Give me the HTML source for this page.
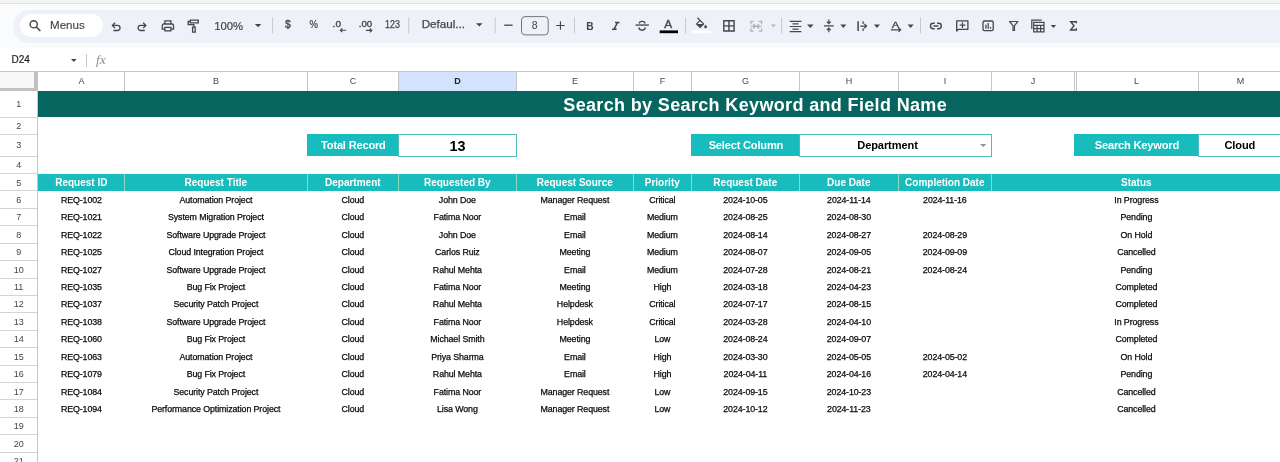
<!DOCTYPE html>
<html><head><meta charset="utf-8"><title>Search Sheet</title>
<style>
html,body{margin:0;padding:0;}
body{width:1280px;height:462px;overflow:hidden;background:#fff;position:relative;font-family:"Liberation Sans",Arial,sans-serif;color:#1f1f1f;}
#wrap{position:absolute;left:0;top:0;width:1280px;height:462px;overflow:hidden;will-change:transform;}
.abs{position:absolute;}
.t{position:absolute;width:400px;height:20px;line-height:20px;text-align:center;white-space:nowrap;}
.tt{position:absolute;white-space:nowrap;line-height:1;}
.c{color:#0a0a0a;letter-spacing:-0.1px;-webkit-text-stroke:0.25px #0a0a0a;}
.h{color:#fff;font-weight:bold;}
.n{color:#444746;}
svg{position:absolute;overflow:visible;}
</style></head><body><div id="wrap">

<div class="abs" style="left:0;top:0;width:1280px;height:3px;background:#f3f3f1"></div>
<div class="abs" style="left:0;top:3px;width:1280px;height:1px;background:#e1e1e1"></div>
<div class="abs" style="left:0;top:4px;width:1280px;height:44px;background:#f9fbfd"></div>
<div class="abs" style="left:13px;top:10px;width:1300px;height:32.5px;border-radius:17px;background:#eef1f7"></div>
<div class="abs" style="left:20px;top:14px;width:83px;height:23px;border-radius:12px;background:#fff"></div>
<svg style="left:0;top:0" width="1280" height="48" viewBox="0 0 1280 48" fill="none" stroke="#444746" stroke-width="1.3" stroke-linecap="butt" stroke-linejoin="miter" font-family="'Liberation Sans',Arial,sans-serif">
<!-- search -->
<circle cx="33.7" cy="24.3" r="3.6" stroke-width="1.4"/><path d="M36.4 27L40.4 31" stroke-width="1.5"/>
<text x="50" y="29.2" font-size="11.6" fill="#444746" stroke="#444746" stroke-width="0.15" textLength="34.7" lengthAdjust="spacingAndGlyphs">Menus</text>
<!-- undo -->
<path d="M112.6 25.4H117.5a2.55 2.55 0 0 1 0 5.1H113.4M115 22.8L112.4 25.4L115 28"/>
<!-- redo -->
<path d="M145.6 25.4H140.7a2.55 2.55 0 0 0 0 5.1H144.8M143.2 22.8L145.8 25.4L143.2 28"/>
<!-- print -->
<path d="M164.9 24V20.9H170.9V24M164.6 29.2H162.3V25.4a1.4 1.4 0 0 1 1.4 -1.4H172.1a1.4 1.4 0 0 1 1.4 1.4V29.2H171.2M164.9 27.3H170.9V30.9H164.9z"/>
<!-- paint format -->
<path d="M190.3 20.2H198.3V22.9H190.3zM190.3 21.5H188.2V24.7H193.9V27.2M192.6 27.2H195.2V32.2H192.6z"/>
<text x="214.2" y="29.6" font-size="11.8" fill="#444746" stroke="#444746" stroke-width="0.2" textLength="28.9" lengthAdjust="spacingAndGlyphs">100%</text>
<path d="M254.8 24H261.4L258.1 27.3z" fill="#444746" stroke="none"/>
<path d="M272.6 17.5V33.5M408.7 17.5V33.5M495.2 17.5V33.5M574.5 17.5V33.5M685.5 17.5V33.5M781.6 17.5V33.5M920.5 17.5V33.5" stroke="#c7c9cc" stroke-width="1"/>
<text x="284.9" y="28.2" font-size="10.6" fill="#444746" stroke="#444746" stroke-width="0.35" textLength="5.8" lengthAdjust="spacingAndGlyphs">$</text>
<text x="309.6" y="28.4" font-size="10.6" fill="#444746" stroke="#444746" stroke-width="0.2" textLength="8.4" lengthAdjust="spacingAndGlyphs">%</text>
<text x="332.6" y="27.2" font-size="9.4" fill="#444746" stroke="#444746" stroke-width="0.35" textLength="8.4" lengthAdjust="spacingAndGlyphs">.0</text>
<path d="M346.2 30.2H340.4M342.3 28.3L340.3 30.2L342.3 32.1" stroke-width="1.1"/>
<text x="358.7" y="27.2" font-size="9.4" fill="#444746" stroke="#444746" stroke-width="0.35" textLength="13.5" lengthAdjust="spacingAndGlyphs">.00</text>
<path d="M365.9 30.4H371.7M369.8 28.5L371.8 30.4L369.8 32.3" stroke-width="1.1"/>
<text x="385" y="28.2" font-size="10.2" fill="#444746" stroke="#444746" stroke-width="0.25" textLength="14.9" lengthAdjust="spacingAndGlyphs">123</text>
<text x="421.7" y="27.8" font-size="11.2" fill="#444746" stroke="#444746" stroke-width="0.25" textLength="43.4" lengthAdjust="spacingAndGlyphs">Defaul...</text>
<path d="M476 23.2H482.6L479.3 26.5z" fill="#444746" stroke="none"/>
<path d="M504.2 25.2H512.6"/>
<rect x="521.5" y="16.6" width="26.7" height="18.3" rx="3.5" stroke="#747775" stroke-width="1"/>
<text x="531.7" y="28.8" font-size="10.5" fill="#444746" stroke="none">8</text>
<path d="M556.2 25.5H564.7M560.45 21.2V29.8" stroke-width="1.15"/>
<text x="586.2" y="29.9" font-size="11.8" font-weight="bold" fill="#444746" stroke="none" textLength="7.4" lengthAdjust="spacingAndGlyphs">B</text>
<path d="M615 22.4H619.6M612 29.3H616.6M617.6 22.4L614 29.3" stroke-width="1.5"/>
<!-- strikethrough -->
<path d="M635.5 25.05H648.9" stroke-width="1.35"/>
<path d="M645 23.4C645 22 643.6 21.4 642.1 21.4C640.6 21.4 639.3 22 639.3 23.4M639 27.6C639 29.4 640.5 30.2 642.1 30.2C643.8 30.2 645.2 29.4 645.2 27.6" stroke-width="1.4"/>
<!-- text color -->
<text x="664.2" y="27.8" font-size="11.2" fill="#444746" stroke="#444746" stroke-width="0.35" textLength="7.9" lengthAdjust="spacingAndGlyphs">A</text>
<rect x="659.7" y="30.4" width="18.3" height="2.8" fill="#000" stroke="none"/>
<!-- fill color -->
<path d="M697.4 17.700L703.6 23.900L700.1 27.400L696.600 23.900L700.1 20.400" stroke-width="1.25"/>
<path d="M696.800 23.900H703.400L700.1 27.200z" fill="#444746" stroke="none"/>
<path d="M705.6 24.700C705.6 24.700 704.2 26.200 704.2 26.900A1.4 1.4 0 0 0 707 26.900C707 26.200 705.6 24.700 705.6 24.700z" fill="#444746" stroke="none"/>
<rect x="691.5" y="30.4" width="19.3" height="2.8" fill="#fff" stroke="none"/>
<!-- borders -->
<path d="M723.8 20.8H734.100V31H723.8zM728.950 20.8V31M723.8 25.9H734.100" stroke-width="1.4"/>
<!-- merge (disabled) -->
<g stroke="#aeb2b8" stroke-width="1.25">
<path d="M753.6 21.4H750.8V24.300M750.8 28.200V31.100H753.6M758.800 21.4H761.600V24.300M761.600 28.200V31.100H758.800M750.8 26.25H755.300M753.300 24L755.600 26.25L753.300 28.500M761.600 26.25H757.100M759.100 24L756.800 26.25L759.100 28.500"/>
</g>
<path d="M770.9 24.6H776L773.450 27.6z" fill="#b4b8bd" stroke="none"/>
<!-- align center -->
<path d="M789.7 21.3H801.4M792.5 23.9H798.6M789.7 26.5H801.4M792.5 29.1H798.6M789.7 31.7H801.4" stroke-width="1.2"/>
<path d="M807 24.6H813.6L810.3 27.9z" fill="#444746" stroke="none"/>
<!-- valign middle -->
<path d="M823.9 25.9H833.7M828.8 19.4V23.200M826.900 21.600L828.8 23.600L830.700 21.600M828.8 32.300V28.600M826.900 30.200L828.8 28.200L830.700 30.200" stroke-width="1.2"/>
<path d="M840.3 24.6H846.4L843.350 27.9z" fill="#444746" stroke="none"/>
<!-- wrap overflow -->
<path d="M858.1 21.200V31.100" stroke-width="1.5"/>
<path d="M860.3 26.1H866.300M864.300 23.900L866.600 26.1L864.300 28.300M863.100 21.200V24M863.100 28.300V31.100" stroke-width="1.2"/>
<path d="M873.9 24.6H880L876.950 27.9z" fill="#444746" stroke="none"/>
<!-- rotate -->
<text x="891.7" y="27.700" font-size="9.600" fill="#444746" stroke="#444746" stroke-width="0.35" textLength="7.5" lengthAdjust="spacingAndGlyphs">A</text>
<path d="M890.8 29.800H900.200M898.500 27.900L900.600 29.800L898.500 31.700" stroke-width="1.25"/>
<path d="M907.600 24.6H913.700L910.650 27.9z" fill="#444746" stroke="none"/>
<!-- link -->
<path d="M934.700 23.300H933.200a2.750 2.750 0 0 0 0 5.500H934.700M937.100 23.300H938.600a2.750 2.750 0 0 1 0 5.500H937.100M933.400 26.050H938.400" stroke-width="1.4"/>
<!-- comment -->
<path d="M956.700 31V20.800H967.900V29.300H958.400z" stroke-width="1.3" stroke-linejoin="round"/>
<path d="M959.600 25.200H965.400M962.500 22.300V28.100" stroke-width="1.2"/>
<!-- chart -->
<rect x="983" y="21" width="10.2" height="9.700" rx="1.4" stroke-width="1.3"/>
<path d="M985.900 28.700V24.800M988.200 28.700V23M990.500 28.700V26.900" stroke-width="1.25"/>
<!-- filter -->
<path d="M1009.600 21.500H1017.900L1014.500 25.700V30.400H1013V25.700z" stroke-width="1.2" stroke-linejoin="round"/>
<!-- filter views -->
<path d="M1033.700 22.300H1044V31.800H1033.700zM1033.700 25.400H1044M1033.700 28.600H1044M1037.100 25.400V31.800M1040.600 25.400V31.800" stroke-width="1.2"/>
<path d="M1031.800 28.900V20.200H1041.600" stroke-width="1.2"/>
<path d="M1050.700 24.900H1056.100L1053.400 27.900z" fill="#444746" stroke="none"/>
<!-- sigma -->
<path d="M1076.300 23.300V21.700H1070.700L1074 25.800L1070.700 29.900H1076.300V28.300" stroke-width="1.45"/>
</svg>

<div class="abs" style="left:0;top:48px;width:1280px;height:23px;background:#fff"></div>
<div class="tt" style="left:11.5px;top:54.6px;font-size:10px;color:#1f1f1f;-webkit-text-stroke:0.2px #1f1f1f;">D24</div>
<svg style="left:70.8px;top:58.6px" width="5.6" height="3" viewBox="0 0 5.6 3"><path d="M0 0h5.6l-2.8 3z" fill="#444746"/></svg>
<div class="abs" style="left:86px;top:54px;width:1px;height:13px;background:#c7c7c7"></div>
<div class="tt" style="left:96px;top:53px;font-size:13.5px;font-style:italic;font-family:'Liberation Serif',serif;color:#8a8f94;">fx</div>
<div class="abs" style="left:0;top:71px;width:1280px;height:1px;background:#c4c7c5"></div>
<div class="abs" style="left:0;top:72px;width:34px;height:16px;background:#f8f9fa"></div>
<div class="abs" style="left:34px;top:72px;width:4px;height:19px;background:#c2c2c2"></div>
<div class="abs" style="left:0;top:88px;width:38px;height:3px;background:#c2c2c2"></div>
<div class="abs" style="left:399px;top:72px;width:117px;height:19px;background:#d3e3fd"></div>
<div class="abs" style="left:124px;top:72px;width:1px;height:19px;background:#c4c7c5"></div>
<div class="t n" style="left:-118.50px;top:70.88px;font-size:9px;color:#444746;"><span>A</span></div>
<div class="abs" style="left:307px;top:72px;width:1px;height:19px;background:#c4c7c5"></div>
<div class="t n" style="left:16.00px;top:70.88px;font-size:9px;color:#444746;"><span>B</span></div>
<div class="abs" style="left:398px;top:72px;width:1px;height:19px;background:#c4c7c5"></div>
<div class="t n" style="left:153.00px;top:70.88px;font-size:9px;color:#444746;"><span>C</span></div>
<div class="abs" style="left:516px;top:72px;width:1px;height:19px;background:#c4c7c5"></div>
<div class="t n" style="left:257.50px;top:70.88px;font-size:9px;color:#1f1f1f;font-weight:bold;"><span>D</span></div>
<div class="abs" style="left:633px;top:72px;width:1px;height:19px;background:#c4c7c5"></div>
<div class="t n" style="left:375.00px;top:70.88px;font-size:9px;color:#444746;"><span>E</span></div>
<div class="abs" style="left:691px;top:72px;width:1px;height:19px;background:#c4c7c5"></div>
<div class="t n" style="left:462.50px;top:70.88px;font-size:9px;color:#444746;"><span>F</span></div>
<div class="abs" style="left:799px;top:72px;width:1px;height:19px;background:#c4c7c5"></div>
<div class="t n" style="left:545.50px;top:70.88px;font-size:9px;color:#444746;"><span>G</span></div>
<div class="abs" style="left:898px;top:72px;width:1px;height:19px;background:#c4c7c5"></div>
<div class="t n" style="left:649.00px;top:70.88px;font-size:9px;color:#444746;"><span>H</span></div>
<div class="abs" style="left:991px;top:72px;width:1px;height:19px;background:#c4c7c5"></div>
<div class="t n" style="left:745.00px;top:70.88px;font-size:9px;color:#444746;"><span>I</span></div>
<div class="abs" style="left:1074px;top:72px;width:1px;height:19px;background:#c4c7c5"></div>
<div class="t n" style="left:833.00px;top:70.88px;font-size:9px;color:#444746;"><span>J</span></div>
<div class="abs" style="left:1198px;top:72px;width:1px;height:19px;background:#c4c7c5"></div>
<div class="t n" style="left:936.50px;top:70.88px;font-size:9px;color:#444746;"><span>L</span></div>
<div class="t n" style="left:1040.50px;top:70.88px;font-size:9px;color:#444746;"><span>M</span></div>
<div class="abs" style="left:1076px;top:72px;width:1px;height:19px;background:#c4c7c5"></div>
<div class="abs" style="left:37px;top:91px;width:1px;height:371px;background:#c4c7c5"></div>
<div class="abs" style="left:0;top:117px;width:37px;height:1px;background:#d3d5d4"></div>
<div class="t n" style="left:-181.30px;top:93.88px;font-size:9px;"><span>1</span></div>
<div class="abs" style="left:0;top:134px;width:37px;height:1px;background:#d3d5d4"></div>
<div class="t n" style="left:-181.30px;top:115.88px;font-size:9px;"><span>2</span></div>
<div class="abs" style="left:0;top:156px;width:37px;height:1px;background:#d3d5d4"></div>
<div class="t n" style="left:-181.30px;top:134.88px;font-size:9px;"><span>3</span></div>
<div class="abs" style="left:0;top:173px;width:37px;height:1px;background:#d3d5d4"></div>
<div class="t n" style="left:-181.30px;top:154.88px;font-size:9px;"><span>4</span></div>
<div class="abs" style="left:0;top:190px;width:37px;height:1px;background:#d3d5d4"></div>
<div class="t n" style="left:-181.30px;top:172.88px;font-size:9px;"><span>5</span></div>
<div class="abs" style="left:0;top:208px;width:37px;height:1px;background:#d3d5d4"></div>
<div class="t n" style="left:-181.30px;top:189.88px;font-size:9px;"><span>6</span></div>
<div class="abs" style="left:0;top:225px;width:37px;height:1px;background:#d3d5d4"></div>
<div class="t n" style="left:-181.30px;top:206.88px;font-size:9px;"><span>7</span></div>
<div class="abs" style="left:0;top:243px;width:37px;height:1px;background:#d3d5d4"></div>
<div class="t n" style="left:-181.30px;top:224.88px;font-size:9px;"><span>8</span></div>
<div class="abs" style="left:0;top:260px;width:37px;height:1px;background:#d3d5d4"></div>
<div class="t n" style="left:-181.30px;top:241.88px;font-size:9px;"><span>9</span></div>
<div class="abs" style="left:0;top:278px;width:37px;height:1px;background:#d3d5d4"></div>
<div class="t n" style="left:-181.30px;top:259.88px;font-size:9px;"><span>10</span></div>
<div class="abs" style="left:0;top:295px;width:37px;height:1px;background:#d3d5d4"></div>
<div class="t n" style="left:-181.30px;top:276.88px;font-size:9px;"><span>11</span></div>
<div class="abs" style="left:0;top:312px;width:37px;height:1px;background:#d3d5d4"></div>
<div class="t n" style="left:-181.30px;top:293.88px;font-size:9px;"><span>12</span></div>
<div class="abs" style="left:0;top:330px;width:37px;height:1px;background:#d3d5d4"></div>
<div class="t n" style="left:-181.30px;top:311.88px;font-size:9px;"><span>13</span></div>
<div class="abs" style="left:0;top:347px;width:37px;height:1px;background:#d3d5d4"></div>
<div class="t n" style="left:-181.30px;top:328.88px;font-size:9px;"><span>14</span></div>
<div class="abs" style="left:0;top:365px;width:37px;height:1px;background:#d3d5d4"></div>
<div class="t n" style="left:-181.30px;top:346.88px;font-size:9px;"><span>15</span></div>
<div class="abs" style="left:0;top:382px;width:37px;height:1px;background:#d3d5d4"></div>
<div class="t n" style="left:-181.30px;top:363.88px;font-size:9px;"><span>16</span></div>
<div class="abs" style="left:0;top:399px;width:37px;height:1px;background:#d3d5d4"></div>
<div class="t n" style="left:-181.30px;top:381.88px;font-size:9px;"><span>17</span></div>
<div class="abs" style="left:0;top:417px;width:37px;height:1px;background:#d3d5d4"></div>
<div class="t n" style="left:-181.30px;top:398.88px;font-size:9px;"><span>18</span></div>
<div class="abs" style="left:0;top:434px;width:37px;height:1px;background:#d3d5d4"></div>
<div class="t n" style="left:-181.30px;top:415.88px;font-size:9px;"><span>19</span></div>
<div class="abs" style="left:0;top:452px;width:37px;height:1px;background:#d3d5d4"></div>
<div class="t n" style="left:-181.30px;top:433.88px;font-size:9px;"><span>20</span></div>
<div class="abs" style="left:0;top:469px;width:37px;height:1px;background:#d3d5d4"></div>
<div class="t n" style="left:-181.30px;top:450.88px;font-size:9px;"><span>21</span></div>
<div class="abs" style="left:38px;top:91px;width:1242px;height:26px;background:#06655f"></div>
<div class="t h" id="title" style="left:555.20px;top:94.76px;font-size:18px;letter-spacing:0.35px;"><span>Search by Search Keyword and Field Name</span></div>
<div class="abs" style="left:307px;top:134px;width:91px;height:22px;background:#19bcbd"></div>
<div class="t h" id="l1" style="left:153.40px;top:135.16px;font-size:11.07px;letter-spacing:-0.18px;"><span>Total Record</span></div>
<div class="abs" style="left:398px;top:134px;width:119px;height:23px;box-sizing:border-box;border:1px solid #4fbcbc;background:#fff"></div>
<div class="t " id="v1" style="left:257.50px;top:136.01px;font-size:14.4px;color:#000;font-weight:bold;letter-spacing:0px;"><span>13</span></div>
<div class="abs" style="left:691px;top:134px;width:108px;height:22px;background:#19bcbd"></div>
<div class="t h" id="l2" style="left:545.90px;top:135.16px;font-size:11.07px;letter-spacing:-0.18px;"><span>Select Column</span></div>
<div class="abs" style="left:799px;top:134px;width:193px;height:23px;box-sizing:border-box;border:1px solid #4fbcbc;background:#fff"></div>
<div class="t " id="v2" style="left:687.50px;top:135.16px;font-size:11.07px;color:#000;font-weight:bold;letter-spacing:-0.1px;"><span>Department</span></div>
<svg style="left:979.8px;top:144.2px" width="6.4" height="3" viewBox="0 0 6.4 3"><path d="M0 0h6.4l-3.200 3z" fill="#8f9498"/></svg>
<div class="abs" style="left:1074px;top:134px;width:124px;height:22px;background:#19bcbd"></div>
<div class="t h" id="l3" style="left:936.90px;top:135.16px;font-size:11.07px;letter-spacing:-0.18px;"><span>Search Keyword</span></div>
<div class="abs" style="left:1198px;top:134px;width:85px;height:23px;box-sizing:border-box;border:1px solid #4fbcbc;background:#fff"></div>
<div class="t " id="v3" style="left:1039.80px;top:135.16px;font-size:11.07px;color:#000;font-weight:bold;letter-spacing:-0.1px;"><span>Cloud</span></div>
<div class="abs" style="left:38px;top:173px;width:1242px;height:1px;background:#fbf8e6"></div>
<div class="abs" style="left:38px;top:174px;width:1242px;height:17px;background:#19bcbd"></div>
<div class="abs" style="left:123.5px;top:174px;width:1px;height:17px;background:#8bd9c0"></div>
<div class="t h" id="hA" style="left:-118.70px;top:172.53px;font-size:10px;"><span>Request ID</span></div>
<div class="abs" style="left:306.5px;top:174px;width:1px;height:17px;background:#8bd9c0"></div>
<div class="t h" id="hB" style="left:15.80px;top:172.53px;font-size:10px;"><span>Request Title</span></div>
<div class="abs" style="left:397.5px;top:174px;width:1px;height:17px;background:#8bd9c0"></div>
<div class="t h" id="hC" style="left:152.80px;top:172.53px;font-size:10px;"><span>Department</span></div>
<div class="abs" style="left:515.5px;top:174px;width:1px;height:17px;background:#8bd9c0"></div>
<div class="t h" id="hD" style="left:257.30px;top:172.53px;font-size:10px;"><span>Requested By</span></div>
<div class="abs" style="left:632.5px;top:174px;width:1px;height:17px;background:#8bd9c0"></div>
<div class="t h" id="hE" style="left:374.80px;top:172.53px;font-size:10px;"><span>Request Source</span></div>
<div class="abs" style="left:690.5px;top:174px;width:1px;height:17px;background:#8bd9c0"></div>
<div class="t h" id="hF" style="left:462.30px;top:172.53px;font-size:10px;"><span>Priority</span></div>
<div class="abs" style="left:798.5px;top:174px;width:1px;height:17px;background:#8bd9c0"></div>
<div class="t h" id="hG" style="left:545.30px;top:172.53px;font-size:10px;"><span>Request Date</span></div>
<div class="abs" style="left:897.5px;top:174px;width:1px;height:17px;background:#8bd9c0"></div>
<div class="t h" id="hH" style="left:648.80px;top:172.53px;font-size:10px;"><span>Due Date</span></div>
<div class="abs" style="left:990.5px;top:174px;width:1px;height:17px;background:#8bd9c0"></div>
<div class="t h" id="hI" style="left:744.80px;top:172.53px;font-size:10px;"><span>Completion Date</span></div>
<div class="t h" id="hL" style="left:936.30px;top:172.53px;font-size:10px;"><span>Status</span></div>
<div class="t c" id="r6A" style="left:-118.60px;top:189.93px;font-size:8.85px;"><span>REQ-1002</span></div>
<div class="t c" id="r6B" style="left:15.90px;top:189.93px;font-size:8.85px;"><span>Automation Project</span></div>
<div class="t c" id="r6C" style="left:152.90px;top:189.93px;font-size:8.85px;"><span>Cloud</span></div>
<div class="t c" id="r6D" style="left:257.40px;top:189.93px;font-size:8.85px;"><span>John Doe</span></div>
<div class="t c" id="r6E" style="left:374.90px;top:189.93px;font-size:8.85px;"><span>Manager Request</span></div>
<div class="t c" id="r6F" style="left:462.40px;top:189.93px;font-size:8.85px;"><span>Critical</span></div>
<div class="t c" id="r6G" style="left:545.40px;top:189.93px;font-size:8.85px;"><span>2024-10-05</span></div>
<div class="t c" id="r6H" style="left:648.90px;top:189.93px;font-size:8.85px;"><span>2024-11-14</span></div>
<div class="t c" id="r6I" style="left:744.90px;top:189.93px;font-size:8.85px;"><span>2024-11-16</span></div>
<div class="t c" id="r6L" style="left:936.40px;top:189.93px;font-size:8.85px;"><span>In Progress</span></div>
<div class="t c" id="r7A" style="left:-118.60px;top:206.93px;font-size:8.85px;"><span>REQ-1021</span></div>
<div class="t c" id="r7B" style="left:15.90px;top:206.93px;font-size:8.85px;"><span>System Migration Project</span></div>
<div class="t c" id="r7C" style="left:152.90px;top:206.93px;font-size:8.85px;"><span>Cloud</span></div>
<div class="t c" id="r7D" style="left:257.40px;top:206.93px;font-size:8.85px;"><span>Fatima Noor</span></div>
<div class="t c" id="r7E" style="left:374.90px;top:206.93px;font-size:8.85px;"><span>Email</span></div>
<div class="t c" id="r7F" style="left:462.40px;top:206.93px;font-size:8.85px;"><span>Medium</span></div>
<div class="t c" id="r7G" style="left:545.40px;top:206.93px;font-size:8.85px;"><span>2024-08-25</span></div>
<div class="t c" id="r7H" style="left:648.90px;top:206.93px;font-size:8.85px;"><span>2024-08-30</span></div>
<div class="t c" id="r7L" style="left:936.40px;top:206.93px;font-size:8.85px;"><span>Pending</span></div>
<div class="t c" id="r8A" style="left:-118.60px;top:224.93px;font-size:8.85px;"><span>REQ-1022</span></div>
<div class="t c" id="r8B" style="left:15.90px;top:224.93px;font-size:8.85px;"><span>Software Upgrade Project</span></div>
<div class="t c" id="r8C" style="left:152.90px;top:224.93px;font-size:8.85px;"><span>Cloud</span></div>
<div class="t c" id="r8D" style="left:257.40px;top:224.93px;font-size:8.85px;"><span>John Doe</span></div>
<div class="t c" id="r8E" style="left:374.90px;top:224.93px;font-size:8.85px;"><span>Email</span></div>
<div class="t c" id="r8F" style="left:462.40px;top:224.93px;font-size:8.85px;"><span>Medium</span></div>
<div class="t c" id="r8G" style="left:545.40px;top:224.93px;font-size:8.85px;"><span>2024-08-14</span></div>
<div class="t c" id="r8H" style="left:648.90px;top:224.93px;font-size:8.85px;"><span>2024-08-27</span></div>
<div class="t c" id="r8I" style="left:744.90px;top:224.93px;font-size:8.85px;"><span>2024-08-29</span></div>
<div class="t c" id="r8L" style="left:936.40px;top:224.93px;font-size:8.85px;"><span>On Hold</span></div>
<div class="t c" id="r9A" style="left:-118.60px;top:241.93px;font-size:8.85px;"><span>REQ-1025</span></div>
<div class="t c" id="r9B" style="left:15.90px;top:241.93px;font-size:8.85px;"><span>Cloud Integration Project</span></div>
<div class="t c" id="r9C" style="left:152.90px;top:241.93px;font-size:8.85px;"><span>Cloud</span></div>
<div class="t c" id="r9D" style="left:257.40px;top:241.93px;font-size:8.85px;"><span>Carlos Ruiz</span></div>
<div class="t c" id="r9E" style="left:374.90px;top:241.93px;font-size:8.85px;"><span>Meeting</span></div>
<div class="t c" id="r9F" style="left:462.40px;top:241.93px;font-size:8.85px;"><span>Medium</span></div>
<div class="t c" id="r9G" style="left:545.40px;top:241.93px;font-size:8.85px;"><span>2024-08-07</span></div>
<div class="t c" id="r9H" style="left:648.90px;top:241.93px;font-size:8.85px;"><span>2024-09-05</span></div>
<div class="t c" id="r9I" style="left:744.90px;top:241.93px;font-size:8.85px;"><span>2024-09-09</span></div>
<div class="t c" id="r9L" style="left:936.40px;top:241.93px;font-size:8.85px;"><span>Cancelled</span></div>
<div class="t c" id="r10A" style="left:-118.60px;top:259.93px;font-size:8.85px;"><span>REQ-1027</span></div>
<div class="t c" id="r10B" style="left:15.90px;top:259.93px;font-size:8.85px;"><span>Software Upgrade Project</span></div>
<div class="t c" id="r10C" style="left:152.90px;top:259.93px;font-size:8.85px;"><span>Cloud</span></div>
<div class="t c" id="r10D" style="left:257.40px;top:259.93px;font-size:8.85px;"><span>Rahul Mehta</span></div>
<div class="t c" id="r10E" style="left:374.90px;top:259.93px;font-size:8.85px;"><span>Email</span></div>
<div class="t c" id="r10F" style="left:462.40px;top:259.93px;font-size:8.85px;"><span>Medium</span></div>
<div class="t c" id="r10G" style="left:545.40px;top:259.93px;font-size:8.85px;"><span>2024-07-28</span></div>
<div class="t c" id="r10H" style="left:648.90px;top:259.93px;font-size:8.85px;"><span>2024-08-21</span></div>
<div class="t c" id="r10I" style="left:744.90px;top:259.93px;font-size:8.85px;"><span>2024-08-24</span></div>
<div class="t c" id="r10L" style="left:936.40px;top:259.93px;font-size:8.85px;"><span>Pending</span></div>
<div class="t c" id="r11A" style="left:-118.60px;top:276.93px;font-size:8.85px;"><span>REQ-1035</span></div>
<div class="t c" id="r11B" style="left:15.90px;top:276.93px;font-size:8.85px;"><span>Bug Fix Project</span></div>
<div class="t c" id="r11C" style="left:152.90px;top:276.93px;font-size:8.85px;"><span>Cloud</span></div>
<div class="t c" id="r11D" style="left:257.40px;top:276.93px;font-size:8.85px;"><span>Fatima Noor</span></div>
<div class="t c" id="r11E" style="left:374.90px;top:276.93px;font-size:8.85px;"><span>Meeting</span></div>
<div class="t c" id="r11F" style="left:462.40px;top:276.93px;font-size:8.85px;"><span>High</span></div>
<div class="t c" id="r11G" style="left:545.40px;top:276.93px;font-size:8.85px;"><span>2024-03-18</span></div>
<div class="t c" id="r11H" style="left:648.90px;top:276.93px;font-size:8.85px;"><span>2024-04-23</span></div>
<div class="t c" id="r11L" style="left:936.40px;top:276.93px;font-size:8.85px;"><span>Completed</span></div>
<div class="t c" id="r12A" style="left:-118.60px;top:293.93px;font-size:8.85px;"><span>REQ-1037</span></div>
<div class="t c" id="r12B" style="left:15.90px;top:293.93px;font-size:8.85px;"><span>Security Patch Project</span></div>
<div class="t c" id="r12C" style="left:152.90px;top:293.93px;font-size:8.85px;"><span>Cloud</span></div>
<div class="t c" id="r12D" style="left:257.40px;top:293.93px;font-size:8.85px;"><span>Rahul Mehta</span></div>
<div class="t c" id="r12E" style="left:374.90px;top:293.93px;font-size:8.85px;"><span>Helpdesk</span></div>
<div class="t c" id="r12F" style="left:462.40px;top:293.93px;font-size:8.85px;"><span>Critical</span></div>
<div class="t c" id="r12G" style="left:545.40px;top:293.93px;font-size:8.85px;"><span>2024-07-17</span></div>
<div class="t c" id="r12H" style="left:648.90px;top:293.93px;font-size:8.85px;"><span>2024-08-15</span></div>
<div class="t c" id="r12L" style="left:936.40px;top:293.93px;font-size:8.85px;"><span>Completed</span></div>
<div class="t c" id="r13A" style="left:-118.60px;top:311.93px;font-size:8.85px;"><span>REQ-1038</span></div>
<div class="t c" id="r13B" style="left:15.90px;top:311.93px;font-size:8.85px;"><span>Software Upgrade Project</span></div>
<div class="t c" id="r13C" style="left:152.90px;top:311.93px;font-size:8.85px;"><span>Cloud</span></div>
<div class="t c" id="r13D" style="left:257.40px;top:311.93px;font-size:8.85px;"><span>Fatima Noor</span></div>
<div class="t c" id="r13E" style="left:374.90px;top:311.93px;font-size:8.85px;"><span>Helpdesk</span></div>
<div class="t c" id="r13F" style="left:462.40px;top:311.93px;font-size:8.85px;"><span>Critical</span></div>
<div class="t c" id="r13G" style="left:545.40px;top:311.93px;font-size:8.85px;"><span>2024-03-28</span></div>
<div class="t c" id="r13H" style="left:648.90px;top:311.93px;font-size:8.85px;"><span>2024-04-10</span></div>
<div class="t c" id="r13L" style="left:936.40px;top:311.93px;font-size:8.85px;"><span>In Progress</span></div>
<div class="t c" id="r14A" style="left:-118.60px;top:328.93px;font-size:8.85px;"><span>REQ-1060</span></div>
<div class="t c" id="r14B" style="left:15.90px;top:328.93px;font-size:8.85px;"><span>Bug Fix Project</span></div>
<div class="t c" id="r14C" style="left:152.90px;top:328.93px;font-size:8.85px;"><span>Cloud</span></div>
<div class="t c" id="r14D" style="left:257.40px;top:328.93px;font-size:8.85px;"><span>Michael Smith</span></div>
<div class="t c" id="r14E" style="left:374.90px;top:328.93px;font-size:8.85px;"><span>Meeting</span></div>
<div class="t c" id="r14F" style="left:462.40px;top:328.93px;font-size:8.85px;"><span>Low</span></div>
<div class="t c" id="r14G" style="left:545.40px;top:328.93px;font-size:8.85px;"><span>2024-08-24</span></div>
<div class="t c" id="r14H" style="left:648.90px;top:328.93px;font-size:8.85px;"><span>2024-09-07</span></div>
<div class="t c" id="r14L" style="left:936.40px;top:328.93px;font-size:8.85px;"><span>Completed</span></div>
<div class="t c" id="r15A" style="left:-118.60px;top:346.93px;font-size:8.85px;"><span>REQ-1063</span></div>
<div class="t c" id="r15B" style="left:15.90px;top:346.93px;font-size:8.85px;"><span>Automation Project</span></div>
<div class="t c" id="r15C" style="left:152.90px;top:346.93px;font-size:8.85px;"><span>Cloud</span></div>
<div class="t c" id="r15D" style="left:257.40px;top:346.93px;font-size:8.85px;"><span>Priya Sharma</span></div>
<div class="t c" id="r15E" style="left:374.90px;top:346.93px;font-size:8.85px;"><span>Email</span></div>
<div class="t c" id="r15F" style="left:462.40px;top:346.93px;font-size:8.85px;"><span>High</span></div>
<div class="t c" id="r15G" style="left:545.40px;top:346.93px;font-size:8.85px;"><span>2024-03-30</span></div>
<div class="t c" id="r15H" style="left:648.90px;top:346.93px;font-size:8.85px;"><span>2024-05-05</span></div>
<div class="t c" id="r15I" style="left:744.90px;top:346.93px;font-size:8.85px;"><span>2024-05-02</span></div>
<div class="t c" id="r15L" style="left:936.40px;top:346.93px;font-size:8.85px;"><span>On Hold</span></div>
<div class="t c" id="r16A" style="left:-118.60px;top:363.93px;font-size:8.85px;"><span>REQ-1079</span></div>
<div class="t c" id="r16B" style="left:15.90px;top:363.93px;font-size:8.85px;"><span>Bug Fix Project</span></div>
<div class="t c" id="r16C" style="left:152.90px;top:363.93px;font-size:8.85px;"><span>Cloud</span></div>
<div class="t c" id="r16D" style="left:257.40px;top:363.93px;font-size:8.85px;"><span>Rahul Mehta</span></div>
<div class="t c" id="r16E" style="left:374.90px;top:363.93px;font-size:8.85px;"><span>Email</span></div>
<div class="t c" id="r16F" style="left:462.40px;top:363.93px;font-size:8.85px;"><span>High</span></div>
<div class="t c" id="r16G" style="left:545.40px;top:363.93px;font-size:8.85px;"><span>2024-04-11</span></div>
<div class="t c" id="r16H" style="left:648.90px;top:363.93px;font-size:8.85px;"><span>2024-04-16</span></div>
<div class="t c" id="r16I" style="left:744.90px;top:363.93px;font-size:8.85px;"><span>2024-04-14</span></div>
<div class="t c" id="r16L" style="left:936.40px;top:363.93px;font-size:8.85px;"><span>Pending</span></div>
<div class="t c" id="r17A" style="left:-118.60px;top:381.93px;font-size:8.85px;"><span>REQ-1084</span></div>
<div class="t c" id="r17B" style="left:15.90px;top:381.93px;font-size:8.85px;"><span>Security Patch Project</span></div>
<div class="t c" id="r17C" style="left:152.90px;top:381.93px;font-size:8.85px;"><span>Cloud</span></div>
<div class="t c" id="r17D" style="left:257.40px;top:381.93px;font-size:8.85px;"><span>Fatima Noor</span></div>
<div class="t c" id="r17E" style="left:374.90px;top:381.93px;font-size:8.85px;"><span>Manager Request</span></div>
<div class="t c" id="r17F" style="left:462.40px;top:381.93px;font-size:8.85px;"><span>Low</span></div>
<div class="t c" id="r17G" style="left:545.40px;top:381.93px;font-size:8.85px;"><span>2024-09-15</span></div>
<div class="t c" id="r17H" style="left:648.90px;top:381.93px;font-size:8.85px;"><span>2024-10-23</span></div>
<div class="t c" id="r17L" style="left:936.40px;top:381.93px;font-size:8.85px;"><span>Cancelled</span></div>
<div class="t c" id="r18A" style="left:-118.60px;top:398.93px;font-size:8.85px;"><span>REQ-1094</span></div>
<div class="t c" id="r18B" style="left:15.90px;top:398.93px;font-size:8.85px;"><span>Performance Optimization Project</span></div>
<div class="t c" id="r18C" style="left:152.90px;top:398.93px;font-size:8.85px;"><span>Cloud</span></div>
<div class="t c" id="r18D" style="left:257.40px;top:398.93px;font-size:8.85px;"><span>Lisa Wong</span></div>
<div class="t c" id="r18E" style="left:374.90px;top:398.93px;font-size:8.85px;"><span>Manager Request</span></div>
<div class="t c" id="r18F" style="left:462.40px;top:398.93px;font-size:8.85px;"><span>Low</span></div>
<div class="t c" id="r18G" style="left:545.40px;top:398.93px;font-size:8.85px;"><span>2024-10-12</span></div>
<div class="t c" id="r18H" style="left:648.90px;top:398.93px;font-size:8.85px;"><span>2024-11-23</span></div>
<div class="t c" id="r18L" style="left:936.40px;top:398.93px;font-size:8.85px;"><span>Cancelled</span></div>
</div></body></html>
